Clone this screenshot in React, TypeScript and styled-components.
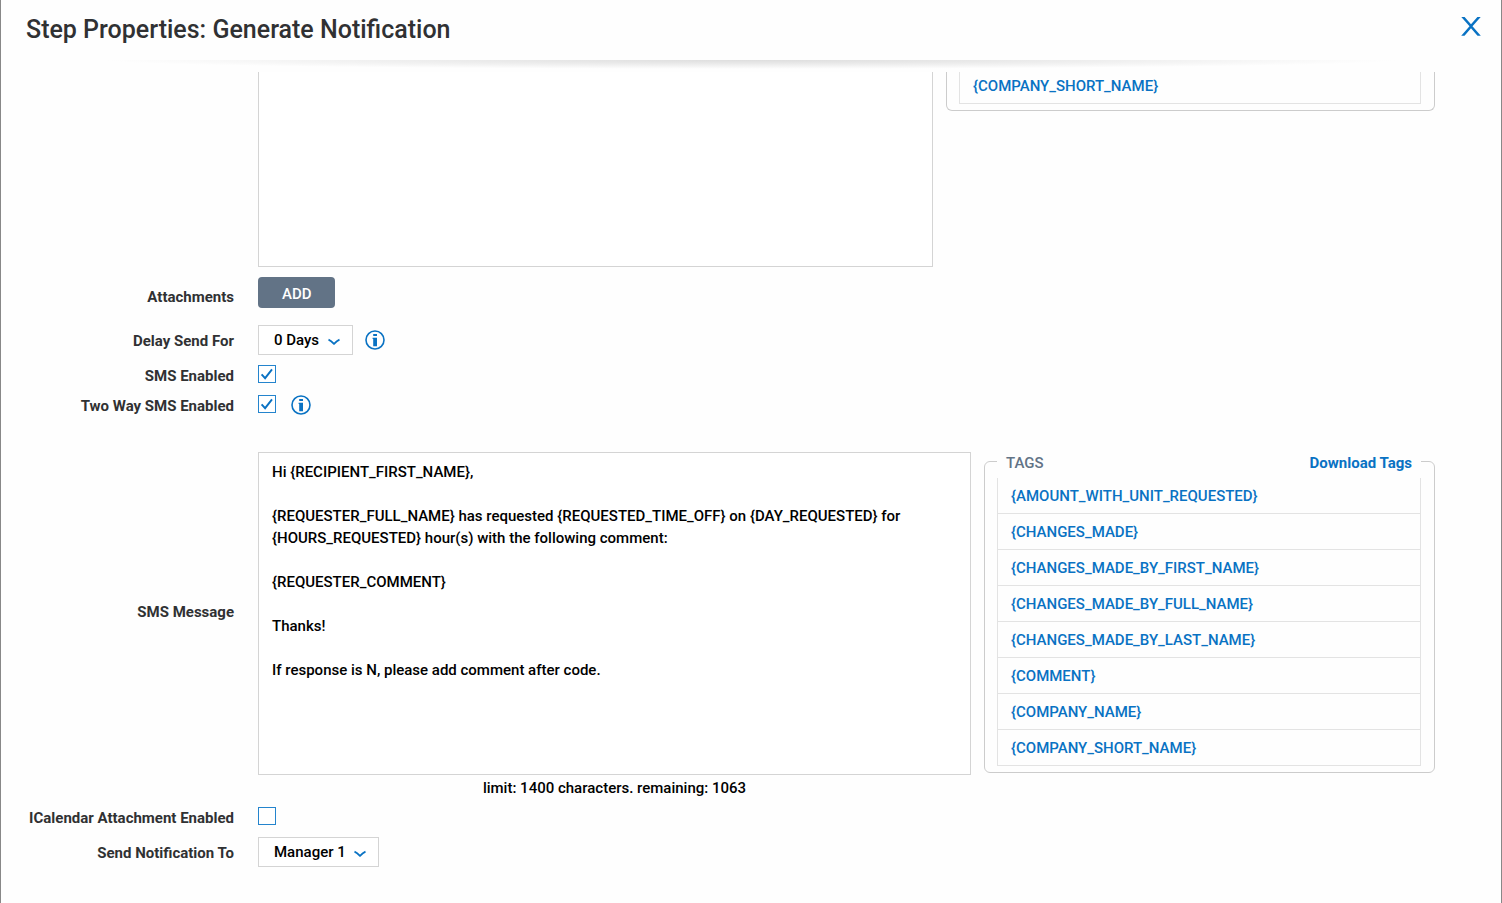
import { useState, type ReactNode } from "react";
import styled, { createGlobalStyle } from "styled-components";

const GlobalStyle = createGlobalStyle`
  *, *::before, *::after { box-sizing: border-box; }
  body {
    margin: 0;
    background: #fff;
    color: #000;
    font: 500 15px/22px Roboto, "Liberation Sans", sans-serif;
  }
`;

const BLUE = "#0972c3";

const Dialog = styled.main`
  display: flex;
  flex-direction: column;
  min-height: 100vh;
  border: solid #888;
  border-width: 0 1px;
  background: #fefefe;
`;

const Header = styled.header`
  display: flex;
  align-items: center;
  justify-content: space-between;
  height: 60px;
  padding: 0 20px 0 25px;
`;

const Title = styled.h1`
  margin: 0;
  color: #303133;
  font-size: 25px;
  font-weight: 500;
  line-height: 30px;
`;

const CloseButton = styled.button`
  display: flex;
  padding: 0;
  margin-bottom: 8px;
  border: 0;
  background: none;
  color: ${BLUE};
  cursor: pointer;
`;

const HeaderShadow = styled.div`
  height: 12px;
  background: radial-gradient(ellipse 43% 9px at 50% 0, #dedede 0%, #e8e8e8 35%, #fefefe 100%) no-repeat;
`;

const Form = styled.form`
  padding: 0 66px 36px 0;
`;

const Row = styled.div<{ $gap?: number }>`
  display: grid;
  grid-template-columns: 233px minmax(0, 1fr);
  column-gap: 24px;
  align-items: center;
  margin-top: ${({ $gap = 10 }) => $gap}px;
`;

const Label = styled.label<{ $raised?: boolean }>`
  padding-top: 2px;
  ${({ $raised }) => $raised && "padding-bottom: 34px;"}
  color: #303133;
  font-weight: 700;
  line-height: 18px;
  text-align: right;
`;

const Controls = styled.div<{ $gap?: number }>`
  display: flex;
  align-items: center;
  gap: ${({ $gap = 12 }) => $gap}px;
`;

const Split = styled.div<{ $text: number; $tags: number }>`
  display: grid;
  grid-template-columns: minmax(0, ${({ $text }) => $text}fr) minmax(0, ${({ $tags }) => $tags}fr);
  column-gap: 13px;
  align-items: start;
`;

const TextArea = styled.textarea<{ $continued?: boolean }>`
  display: block;
  width: 100%;
  height: ${({ $continued }) => ($continued ? 195 : 323)}px;
  padding: 8px 13px;
  border: 1px solid #d4d4d4;
  ${({ $continued }) => $continued && "border-top: 0;"}
  border-radius: 0;
  background: #fff;
  color: #000;
  font: inherit;
  resize: none;
`;

const Counter = styled.p`
  margin: 0;
  padding: 2px 0 5px;
  text-align: center;
`;

const TagBox = styled.fieldset<{ $continued?: boolean }>`
  min-width: 0;
  margin: 0;
  padding: 0 13px 6px 12px;
  border: 1px solid #ccc;
  border-radius: 6px;
  ${({ $continued }) => $continued && "border-top: 0; border-top-left-radius: 0; border-top-right-radius: 0;"}
`;

const TagLegend = styled.legend`
  display: flex;
  justify-content: space-between;
  width: 100%;
  height: 19px;
  padding: 2px 9px 0;
  color: #627386;
  line-height: 18px;
`;

const DownloadLink = styled.a`
  color: ${BLUE};
  font-weight: 700;
  text-decoration: none;
`;

const TagList = styled.ul<{ $continued?: boolean }>`
  display: flex;
  flex-direction: column;
  justify-content: flex-end;
  height: ${({ $continued }) => ($continued ? "32px" : "auto")};
  margin: ${({ $continued }) => ($continued ? 0 : 7)}px 0 0;
  padding: 0;
  overflow: hidden;
  border: solid #e3e3e3;
  border-width: 0 1px;
  list-style: none;
`;

const TagItem = styled.li`
  flex: none;
  height: 36px;
  border-bottom: 1px solid #e3e3e3;
`;

const TagLink = styled.a`
  display: block;
  padding: 7px 13px 6px;
  color: ${BLUE};
  text-decoration: none;
`;

const AddButton = styled.button`
  height: 31px;
  margin-bottom: 7px;
  padding: 2px 23px 0 24px;
  border: 0;
  border-radius: 4px;
  background: #627386;
  color: #fff;
  font: inherit;
  cursor: pointer;
`;

const SelectBox = styled.span`
  position: relative;
  display: inline-flex;

  svg {
    position: absolute;
    right: 12px;
    top: 13px;
    pointer-events: none;
  }
`;

const Select = styled.select`
  appearance: none;
  height: 30px;
  padding: 0 32px 0 15px;
  border: 1px solid #d4d4d4;
  border-radius: 0;
  background: #fff;
  color: #000;
  font: inherit;
`;

const CheckWrap = styled.span`
  position: relative;
  display: flex;
  align-items: flex-start;
  height: 20px;

  svg {
    position: absolute;
    left: 0;
    top: 0;
    pointer-events: none;
  }
`;

const CheckInput = styled.input`
  appearance: none;
  width: 18px;
  height: 18px;
  margin: 0;
  border: 1px solid #2484cd;
  background: #fff;
`;

const InfoButton = styled.button`
  display: flex;
  padding: 0;
  border: 0;
  background: none;
  color: ${BLUE};
`;

function Dropdown({ id, value }: { id: string; value: string }) {
  return (
    <SelectBox>
      <Select id={id} defaultValue={value}>
        <option>{value}</option>
      </Select>
      <svg width="14" height="9" viewBox="0 0 14 9" fill="none" stroke={BLUE} strokeWidth="1.8" aria-hidden="true">
        <path d="M1.5 1.6 Q4 2.6 7 5.8 Q10 2.6 12.5 1.6" />
      </svg>
    </SelectBox>
  );
}

function Checkbox({ id, initial = false }: { id: string; initial?: boolean }) {
  const [checked, setChecked] = useState(initial);
  return (
    <CheckWrap>
      <CheckInput id={id} type="checkbox" checked={checked} onChange={() => setChecked(!checked)} />
      {checked && (
        <svg width="18" height="18" viewBox="0 0 18 18" fill="none" stroke={BLUE} strokeWidth="1.9" aria-hidden="true">
          <path d="M3.6 9.4 L7.1 13.2 L14 4.4" />
        </svg>
      )}
    </CheckWrap>
  );
}

function Info({ label }: { label: string }) {
  return (
    <InfoButton type="button" aria-label={label}>
      <svg width="20" height="20" viewBox="0 0 20 20" aria-hidden="true">
        <circle cx="10" cy="10" r="9" fill="none" stroke="currentColor" strokeWidth="1.6" />
        <path fill="currentColor" d="M8.2 4h3.8v2.1H8.2zM7.6 7.8h4.4v8.4H8.2V9h-.6z" />
      </svg>
    </InfoButton>
  );
}

function Tags({ tags, continued, children }: { tags: string[]; continued?: boolean; children?: ReactNode }) {
  return (
    <TagBox $continued={continued}>
      {children}
      <TagList $continued={continued}>
        {tags.map((tag) => (
          <TagItem key={tag}>
            <TagLink href="#">{`{${tag}}`}</TagLink>
          </TagItem>
        ))}
      </TagList>
    </TagBox>
  );
}

const smsTags = [
  "AMOUNT_WITH_UNIT_REQUESTED",
  "CHANGES_MADE",
  "CHANGES_MADE_BY_FIRST_NAME",
  "CHANGES_MADE_BY_FULL_NAME",
  "CHANGES_MADE_BY_LAST_NAME",
  "COMMENT",
  "COMPANY_NAME",
  "COMPANY_SHORT_NAME",
];

const smsMessage = `Hi {RECIPIENT_FIRST_NAME},

{REQUESTER_FULL_NAME} has requested {REQUESTED_TIME_OFF} on {DAY_REQUESTED} for {HOURS_REQUESTED} hour(s) with the following comment:

{REQUESTER_COMMENT}

Thanks!

If response is N, please add comment after code.`;

export default function App() {
  return (
    <>
      <GlobalStyle />
      <Dialog>
        <Header>
          <Title>Step Properties: Generate Notification</Title>
          <CloseButton type="button" aria-label="Close">
            <svg width="20" height="20" viewBox="0 0 20 20" fill="currentColor" aria-hidden="true">
              <path d="M.3 1h3.3L10 8.3 16.4 1h3.3L11.5 10.3l8.3 9.5h-3.3L10 12.2l-6.5 7.6H.2l8.3-9.5z" />
            </svg>
          </CloseButton>
        </Header>
        <HeaderShadow />
        <Form>
          <Row $gap={0}>
            <span />
            <Split $text={675} $tags={489}>
              <TextArea $continued aria-label="Message" />
              <Tags continued tags={["COMPANY_SHORT_NAME"]} />
            </Split>
          </Row>
          <Row>
            <Label htmlFor="attachments">Attachments</Label>
            <Controls>
              <AddButton id="attachments" type="button">ADD</AddButton>
            </Controls>
          </Row>
          <Row>
            <Label htmlFor="delay">Delay Send For</Label>
            <Controls>
              <Dropdown id="delay" value="0 Days" />
              <Info label="About delayed sending" />
            </Controls>
          </Row>
          <Row>
            <Label htmlFor="sms">SMS Enabled</Label>
            <Controls>
              <Checkbox id="sms" initial />
            </Controls>
          </Row>
          <Row>
            <Label htmlFor="two-way">Two Way SMS Enabled</Label>
            <Controls $gap={15}>
              <Checkbox id="two-way" initial />
              <Info label="About two way SMS" />
            </Controls>
          </Row>
          <Row $gap={37}>
            <Label $raised htmlFor="sms-message">SMS Message</Label>
            <Split $text={713} $tags={451}>
              <TextArea id="sms-message" defaultValue={smsMessage} />
              <Tags tags={smsTags}>
                <TagLegend>
                  <span>TAGS</span>
                  <DownloadLink href="#">Download Tags</DownloadLink>
                </TagLegend>
              </Tags>
              <Counter>limit: 1400 characters. remaining: 1063</Counter>
            </Split>
          </Row>
          <Row $gap={3}>
            <Label htmlFor="ical">ICalendar Attachment Enabled</Label>
            <Controls>
              <Checkbox id="ical" />
            </Controls>
          </Row>
          <Row>
            <Label htmlFor="send-to">Send Notification To</Label>
            <Controls>
              <Dropdown id="send-to" value="Manager 1" />
            </Controls>
          </Row>
        </Form>
      </Dialog>
    </>
  );
}
